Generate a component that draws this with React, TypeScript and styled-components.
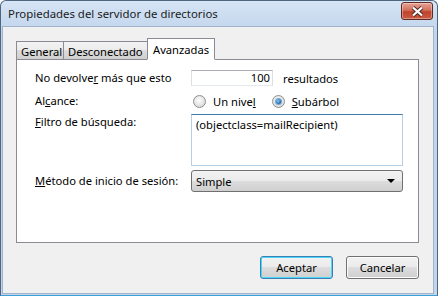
import styled, { createGlobalStyle } from "styled-components";

const GlobalStyle = createGlobalStyle`
  html, body {
    margin: 0;
    padding: 0;
    background: #ffffff;
  }
  body {
    font-family: "Noto Sans", "Open Sans", sans-serif;
    font-size: 11.2px;
    color: #000;
  }
`;

const Window = styled.div`
  width: 438px;
  height: 296px;
  box-sizing: border-box;
  display: flex;
  flex-direction: column;
  border: 1px solid #4f6580;
  border-bottom-color: #3e9ed6;
  border-radius: 6px 6px 0 0;
  background: linear-gradient(#d6e4f5, #c2d5ec 30px, #c2d5ec);
  padding: 0 3px 1px 1px;
`;

const TitleBar = styled.div`
  height: 25px;
  display: flex;
  align-items: center;
  justify-content: space-between;
  padding: 0 1px 0 6px;
`;

const Title = styled.span`
  color: #1b1b1b;
  font-size: 11.4px;
`;

const CloseButton = styled.div`
  width: 30px;
  height: 16px;
  margin-top: -5px;
  border: 1px solid #5e2a24;
  border-radius: 3px;
  background: linear-gradient(#e7a496, #d36f5c 45%, #c0432c 55%, #cc5b44);
  box-shadow: inset 0 0 0 1px rgba(255, 255, 255, 0.35);
  display: flex;
  align-items: center;
  justify-content: center;
`;

const Client = styled.div`
  flex: 1;
  background: #f0f0f0;
  border: 1px solid #9fb3cb;
  padding: 12px 14px 0 13px;
  display: flex;
  flex-direction: column;
`;

const TabRow = styled.div`
  display: flex;
  align-items: flex-end;
  height: 21px;
  position: relative;
  z-index: 1;
  margin-bottom: -1px;
`;

const Tab = styled.div<{ $active?: boolean; $width: number }>`
  box-sizing: border-box;
  width: ${(p) => p.$width}px;
  height: ${(p) => (p.$active ? 22 : 19)}px;
  margin-right: ${(p) => (p.$active ? 0 : -1)}px;
  border: 1px solid #898c95;
  border-bottom: ${(p) => (p.$active ? "1px solid #fff" : "1px solid #898c95")};
  background: ${(p) => (p.$active ? "#fff" : "linear-gradient(#f2f2f2, #ebebeb 50%, #dddddd 50%, #cfcfcf)")};
  padding-left: ${(p) => (p.$active ? 5 : 4)}px;
  display: flex;
  align-items: center;
  padding-top: ${(p) => (p.$active ? 0 : 1)}px;
  white-space: nowrap;
`;

const Panel = styled.div`
  box-sizing: border-box;
  width: 403px;
  height: 184px;
  border: 1px solid #898c95;
  background: #fff;
  padding: 10px 14px 0 18px;
  display: flex;
  flex-direction: column;
`;

const Row = styled.div<{ $height: number; $top: number }>`
  display: grid;
  grid-template-columns: 156px 1fr;
  height: ${(p) => p.$height}px;
  margin-top: ${(p) => p.$top}px;
`;

const Label = styled.div<{ $align?: string }>`
  align-self: ${(p) => p.$align || "center"};
  line-height: 16px;
`;

const Controls = styled.div`
  display: flex;
  align-items: center;
`;

const NumberBox = styled.div`
  box-sizing: border-box;
  width: 82px;
  height: 16px;
  border: 1px solid #dbdfe6;
  border-top-color: #abadb3;
  border-bottom-color: #e3e9ef;
  text-align: right;
  padding-right: 2px;
  line-height: 14px;
`;

const Suffix = styled.span`
  margin-left: 10px;
`;

const RadioOption = styled.label<{ $gap?: number }>`
  display: flex;
  align-items: center;
  margin-left: ${(p) => p.$gap ?? 0}px;
`;

const RadioCircle = styled.span<{ $checked?: boolean }>`
  box-sizing: border-box;
  width: 13px;
  height: 13px;
  border-radius: 50%;
  border: 1px solid #8e8f8f;
  background: radial-gradient(circle at 45% 40%, #ffffff, #dcdcdc 70%, #c7c7c7);
  margin-right: 7px;
  display: flex;
  align-items: center;
  justify-content: center;
  &::after {
    content: "";
    display: ${(p) => (p.$checked ? "block" : "none")};
    width: 5px;
    height: 5px;
    border-radius: 50%;
    background: radial-gradient(circle at 40% 40%, #8ad0f8, #1b5fa6 70%, #0c3b75);
    box-shadow: 0 0 0 1px #6fa6d6;
  }
`;

const FilterBox = styled.div`
  box-sizing: border-box;
  width: 212px;
  height: 52px;
  border: 1px solid #b5cfe7;
  border-top-color: #3d7bad;
  padding: 2px 4px;
  line-height: 16px;
`;

const Select = styled.div`
  box-sizing: border-box;
  width: 212px;
  height: 22px;
  border: 1px solid #707070;
  border-radius: 3px;
  background: linear-gradient(#f2f2f2, #ebebeb 50%, #dddddd 50%, #cfcfcf);
  display: flex;
  align-items: center;
  justify-content: space-between;
  padding: 0 7px 0 4px;
`;

const Arrow = styled.span`
  width: 0;
  height: 0;
  border-left: 4px solid transparent;
  border-right: 4px solid transparent;
  border-top: 4px solid #000;
`;

const ButtonRow = styled.div`
  display: flex;
  justify-content: flex-end;
  gap: 13px;
  width: 403px;
  margin-top: 13px;
`;

const Button = styled.div<{ $default?: boolean }>`
  box-sizing: border-box;
  width: 73px;
  height: 23px;
  border: 1px solid ${(p) => (p.$default ? "#3c7fb1" : "#707070")};
  border-radius: 3px;
  background: linear-gradient(#f2f2f2, #ebebeb 50%, #dddddd 50%, #cfcfcf);
  box-shadow: ${(p) => (p.$default ? "inset 0 0 0 1px #48d8fb" : "inset 0 0 0 1px #fcfcfc")};
  display: flex;
  align-items: center;
  justify-content: center;
`;

export default function App(): JSX.Element {
  return (
    <>
      <GlobalStyle />
      <Window>
        <TitleBar>
          <Title>Propiedades del servidor de directorios</Title>
          <CloseButton>
            <svg width="13" height="11" viewBox="0 0 13 11">
              <path
                d="M2 1.5 L6.5 5.5 L11 1.5 M2 9.5 L6.5 5.5 L11 9.5"
                stroke="#4a2a26"
                strokeWidth="4"
                fill="none"
              />
              <path
                d="M2 1.5 L6.5 5.5 L11 1.5 M2 9.5 L6.5 5.5 L11 9.5"
                stroke="#ffffff"
                strokeWidth="2.2"
                fill="none"
              />
            </svg>
          </CloseButton>
        </TitleBar>
        <Client>
          <TabRow>
            <Tab $width={48}>General</Tab>
            <Tab $width={85}>Desconectado</Tab>
            <Tab $width={68} $active>
              Avanzadas
            </Tab>
          </TabRow>
          <Panel>
            <Row $height={16} $top={0}>
              <Label>
                No devolve<u>r</u> más que esto
              </Label>
              <Controls>
                <NumberBox>100</NumberBox>
                <Suffix>resultados</Suffix>
              </Controls>
            </Row>
            <Row $height={16} $top={7}>
              <Label>
                Al<u>c</u>ance:
              </Label>
              <Controls>
                <RadioOption $gap={2}>
                  <RadioCircle />
                  <span>
                    Un nive<u>l</u>
                  </span>
                </RadioOption>
                <RadioOption $gap={16}>
                  <RadioCircle $checked />
                  <span>
                    <u>S</u>ubárbol
                  </span>
                </RadioOption>
              </Controls>
            </Row>
            <Row $height={52} $top={5}>
              <Label $align="start">
                <u>F</u>iltro de búsqueda:
              </Label>
              <FilterBox>(objectclass=mailRecipient)</FilterBox>
            </Row>
            <Row $height={22} $top={4}>
              <Label>
                <u>M</u>étodo de inicio de sesión:
              </Label>
              <Select>
                <span>Simple</span>
                <Arrow />
              </Select>
            </Row>
          </Panel>
          <ButtonRow>
            <Button $default>Aceptar</Button>
            <Button>Cancelar</Button>
          </ButtonRow>
        </Client>
      </Window>
    </>
  );
}
